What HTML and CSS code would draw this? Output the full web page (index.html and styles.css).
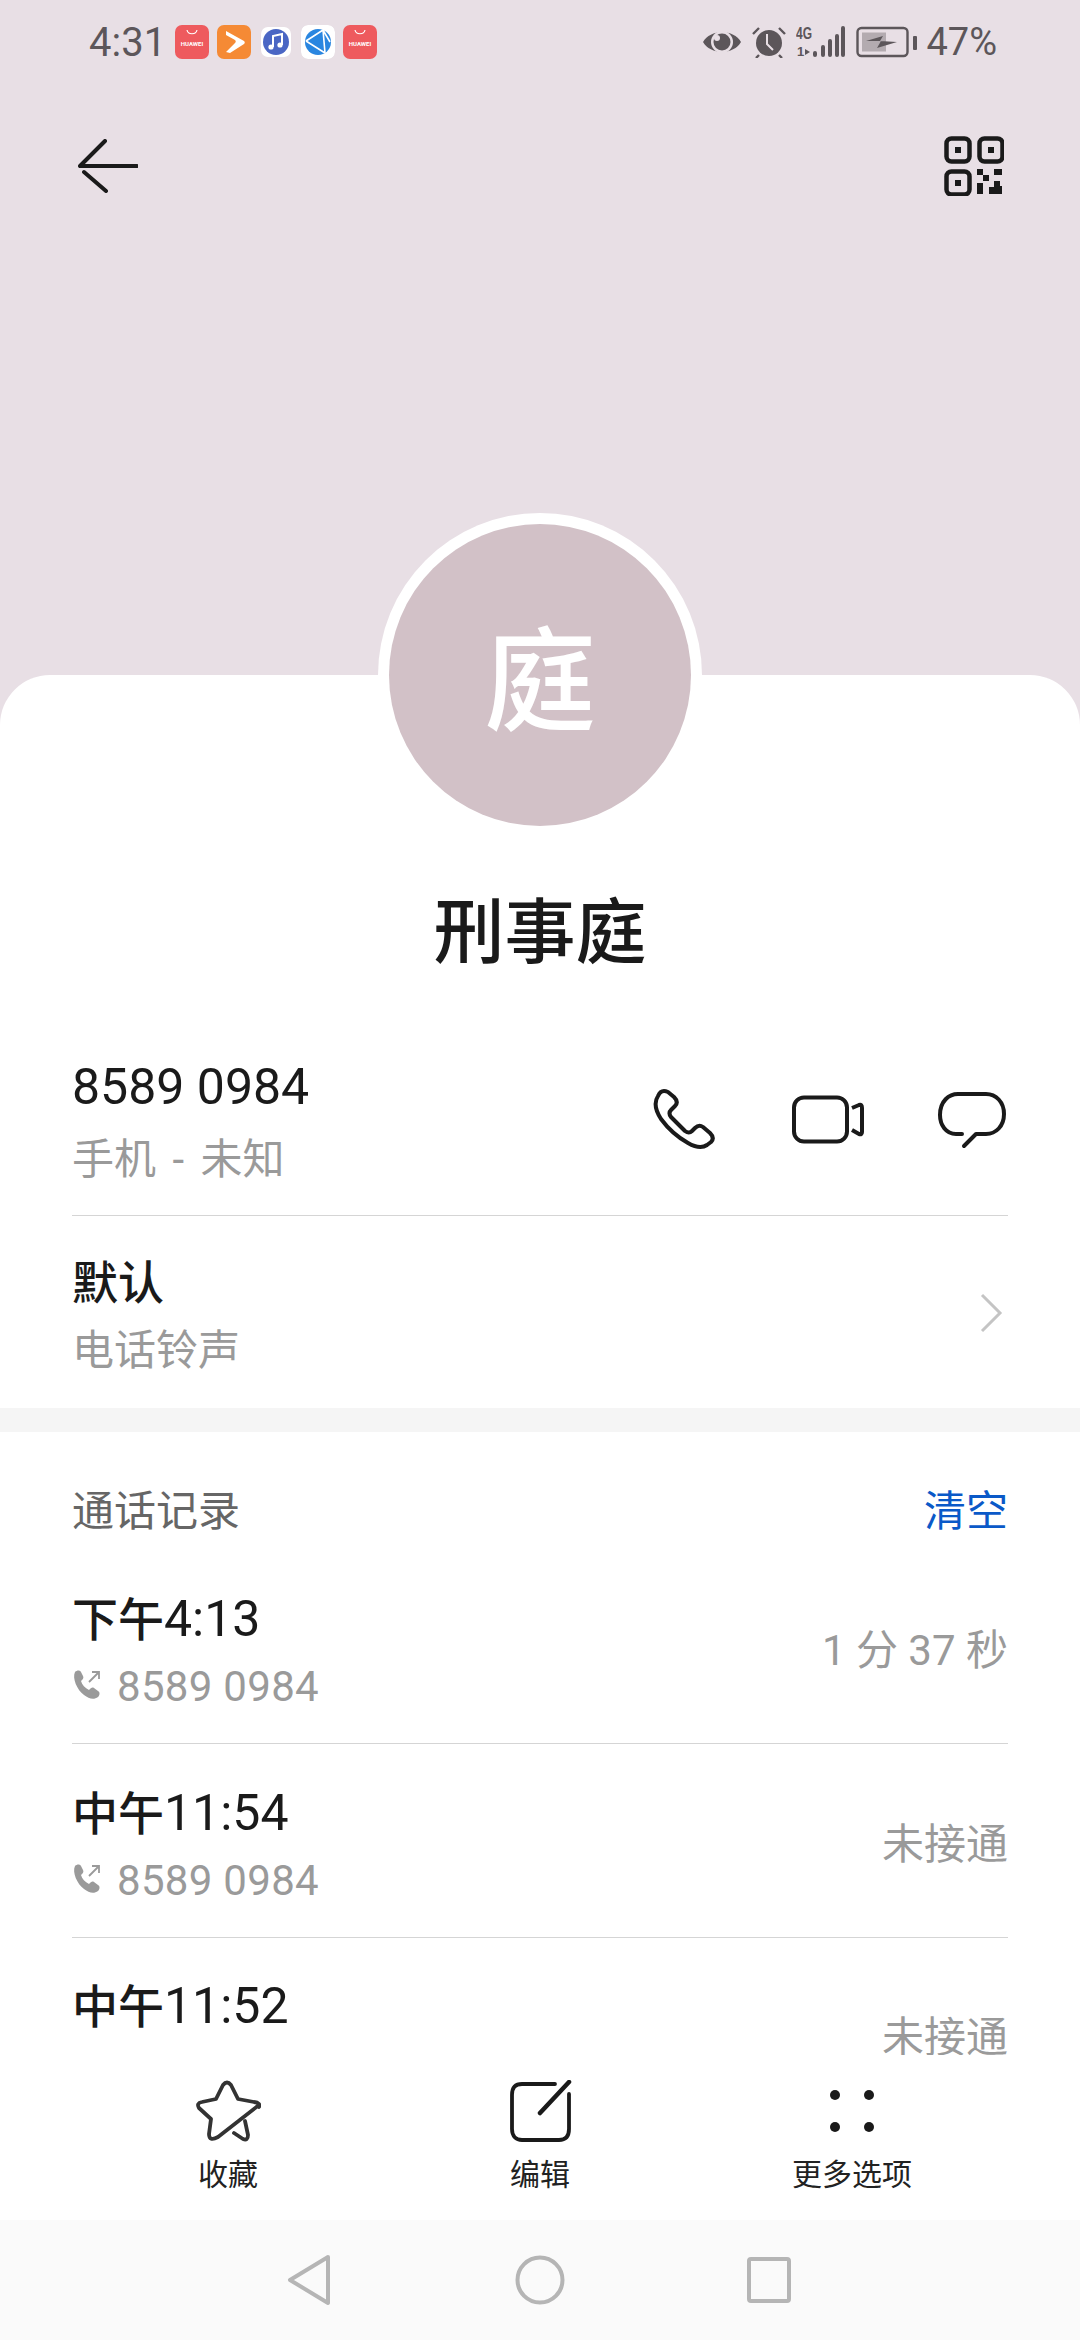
FILE: index.html
```html
<!DOCTYPE html>
<html lang="zh-CN">
<head>
  <meta charset="UTF-8">
  <title>刑事庭</title>
  <link rel="stylesheet" href="styles.css">
</head>
<body>
  <div class="screen">
    <header class="top">
      <div class="status">
        <span class="time">4:31</span>
        <div class="apps">
          <span class="app app-red"><svg viewBox="0 0 34 34"><path d="M12 5c1 5 9 5 10 0" fill="none" stroke="#fff" stroke-width="1.2"/></svg><b>HUAWEI</b></span>
          <span class="app app-orange"><svg viewBox="0 0 34 34"><path d="M9 6l18 10c1 1 1 2 0 3L13 28l-4-1 9-9c1-1 1-2 0-3L9 10z" fill="#fff"/></svg></span>
          <svg class="app app-small" viewBox="0 0 30 30"><rect width="30" height="30" rx="5" fill="#fff"/><circle cx="15" cy="15" r="13" fill="#4a66c4"/><path d="M12 20V9l9-2v11" fill="none" stroke="#fff" stroke-width="2"/><circle cx="10" cy="20" r="2.600" fill="#fff"/><circle cx="19" cy="18" r="2.600" fill="#fff"/></svg>
          <svg class="app" viewBox="0 0 34 34"><rect width="34" height="34" rx="7" fill="#fff"/><circle cx="17" cy="17" r="13" fill="#2a86e0"/><path d="M5 16l17-11M5 16l19 12M22 5l2 23M22 5l7 12" fill="none" stroke="#fff" stroke-width="1.600"/></svg>
          <span class="app app-red"><svg viewBox="0 0 34 34"><path d="M12 5c1 5 9 5 10 0" fill="none" stroke="#fff" stroke-width="1.2"/></svg><b>HUAWEI</b></span>
        </div>
        <div class="indicators">
          <svg width="40" height="28" viewBox="0 0 40 28"><path d="M1 14C8 1 32 1 39 14 32 27 8 27 1 14z" fill="#5c565a"/><circle cx="20" cy="14" r="11" fill="#e8dfe5"/><circle cx="20" cy="14" r="8.500" fill="#5c565a"/><circle cx="15" cy="10" r="3" fill="#e8dfe5"/></svg>
          <svg width="34" height="32" viewBox="0 0 34 32"><circle cx="17" cy="17" r="13" fill="#5c565a"/><path d="M15 8v10l6 6" fill="none" stroke="#e8dfe5" stroke-width="2"/><path d="M1 8l6-6M33 8l-6-6M7 29l-3 3M27 29l3 3" stroke="#5c565a" stroke-width="2.400"/></svg>
          <svg width="50" height="32" viewBox="0 0 50 32"><text x="0" y="13" class="net" textLength="16" lengthAdjust="spacingAndGlyphs">4G</text><text x="1" y="30" class="net-small">1</text><path d="M9 23l5 3-5 3z" fill="#5c565a"/><path d="M19 27v2M27 21v8M34 15v14M41 10v19M47 2v27" stroke="#5c565a" stroke-width="4" stroke-linecap="round"/></svg>
          <svg width="62" height="32" viewBox="0 0 62 32"><rect x="1.500" y="2" width="50" height="28" rx="4" fill="none" stroke="#5c565a" stroke-width="2.400"/><rect x="6" y="6.500" width="24" height="19" fill="#b3abb0"/><path d="M10 15l17-5-3 5 17 1-20 6 4-7z" fill="#5c565a"/><rect x="57" y="10" width="4" height="14" rx="1" fill="#5c565a"/></svg>
          <span class="pct">47%</span>
        </div>
      </div>
      <div class="toolbar">
        <svg width="60" height="54" viewBox="0 0 60 54"><path d="M27 2L2 27h57M6 33l22 19" fill="none" stroke="#1a1a1a" stroke-width="4" stroke-linecap="round" stroke-linejoin="round"/></svg>
        <svg width="60" height="60" viewBox="0 0 60 60">
          <g fill="none" stroke="#1a1a1a" stroke-width="4.500"><rect x="2.500" y="2.500" width="23" height="23" rx="5"/><rect x="35.500" y="2.500" width="23" height="23" rx="5"/><rect x="2.500" y="35.500" width="23" height="23" rx="5"/></g>
          <g fill="#1a1a1a"><rect x="11" y="11" width="6" height="6"/><rect x="44" y="11" width="6" height="6"/><rect x="11" y="44" width="6" height="6"/><path d="M33 33h6v6h-6zM50 33h8v6h-8zM39 39h6v6h-6zM33 47h6v11h-6zM50 45h6v5h2v8H45v-7h5z"/></g>
        </svg>
      </div>
    </header>

    <div class="avatar-ring"><div class="avatar">庭</div></div>

    <main class="card">
      <h1 class="name">刑事庭</h1>

      <section class="info">
        <div class="row row-phone">
          <div>
            <div class="title">8589 0984</div>
            <div class="sub">手机 - 未知</div>
          </div>
          <div class="actions">
            <svg width="72" height="72" viewBox="0 0 72 72"><path d="M10 9Q13 2 20 5L26 10Q31 15 27 19L23 23Q20 26 23 30L37 44Q41 47 44 44L47 41Q51 37 55 40L62 46Q67 51 63 55L59 58Q52 63 40 56 24 47 13 32 4 18 10 9z" fill="none" stroke="#1a1a1a" stroke-width="4" stroke-linejoin="round"/></svg>
            <svg width="72" height="72" viewBox="0 0 72 72"><rect x="2" y="10.500" width="53" height="44" rx="10" fill="none" stroke="#1a1a1a" stroke-width="4"/><path d="M60 21L67 18Q70 17 70 21V45Q70 48 67 47L60 43" fill="none" stroke="#1a1a1a" stroke-width="4" stroke-linejoin="round"/></svg>
            <svg width="72" height="72" viewBox="0 0 72 72"><path d="M26 47H20C10 47 4 38 4 28 4 14 13 7 22 7H50C60 7 68 15 68 27 68 39 60 47 50 47H40L28 59" fill="none" stroke="#1a1a1a" stroke-width="4" stroke-linecap="round" stroke-linejoin="round"/></svg>
          </div>
        </div>
        <div class="row row-ring">
          <div>
            <div class="title title-cjk">默认</div>
            <div class="sub">电话铃声</div>
          </div>
          <svg class="chevron" width="24" height="40" viewBox="0 0 24 40"><path d="M3 2l18 18L3 38" fill="none" stroke="#c4c4c4" stroke-width="3"/></svg>
        </div>
      </section>

      <div class="band"></div>

      <section class="calls">
        <div class="calls-head">
          <span class="calls-title">通话记录</span>
          <span class="clear">清空</span>
        </div>
        <div class="call">
          <div>
            <div class="call-time"><span class="cjk">下午</span>4:13</div>
            <div class="call-num"><svg width="32" height="32" viewBox="0 0 32 32"><use href="#out"/></svg>8589 0984</div>
          </div>
          <span class="call-state">1 分 37 秒</span>
        </div>
        <div class="call">
          <div>
            <div class="call-time"><span class="cjk">中午</span>11:54</div>
            <div class="call-num"><svg width="32" height="32" viewBox="0 0 32 32"><use href="#out"/></svg>8589 0984</div>
          </div>
          <span class="call-state">未接通</span>
        </div>
        <div class="call">
          <div>
            <div class="call-time"><span class="cjk">中午</span>11:52</div>
          </div>
          <span class="call-state">未接通</span>
        </div>
      </section>
    </main>

    <nav class="bottom">
      <div class="tool">
        <svg width="66" height="62" viewBox="0 0 66 62"><path d="M64 25L23 57Q14 62 14 54L16 39 4 28Q1 23 7 22L21 19 28 5Q32 0 36 5L43 19 59 22Q66 23 64 27M39 53L48 59Q53 61 53 55L50 41" fill="none" stroke="#333" stroke-width="3.800" stroke-linecap="round" stroke-linejoin="round"/></svg>
        <span>收藏</span>
      </div>
      <div class="tool">
        <svg width="66" height="62" viewBox="0 0 66 62"><path d="M48 4H15C8 4 5 8 5 15V49C5 56 9 60 15 60H52C59 60 62 56 62 49V14" fill="none" stroke="#1a1a1a" stroke-width="3.800" stroke-linecap="round"/><path d="M33 33L62 2" stroke="#1a1a1a" stroke-width="4.500" stroke-linecap="round"/></svg>
        <span>编辑</span>
      </div>
      <div class="tool">
        <svg width="66" height="62" viewBox="0 0 66 62"><circle cx="16" cy="15" r="5" fill="#1a1a1a"/><circle cx="50" cy="15" r="5" fill="#1a1a1a"/><circle cx="16" cy="47" r="5" fill="#1a1a1a"/><circle cx="50" cy="47" r="5" fill="#1a1a1a"/></svg>
        <span>更多选项</span>
      </div>
    </nav>

    <footer class="navbar">
      <svg width="50" height="52" viewBox="0 0 50 52"><path d="M41 3L3 26l38 23z" fill="none" stroke="#b5b5b5" stroke-width="4" stroke-linejoin="round"/></svg>
      <svg width="50" height="50" viewBox="0 0 50 50"><circle cx="25" cy="25" r="22.500" fill="none" stroke="#b5b5b5" stroke-width="4"/></svg>
      <svg width="50" height="46" viewBox="0 0 50 46"><rect x="6" y="2" width="40" height="42" rx="2" fill="none" stroke="#b5b5b5" stroke-width="4"/></svg>
    </footer>
  </div>

  <svg width="0" height="0" class="defs">
    <symbol id="out" viewBox="0 0 32 32">
      <path d="M3 4c2-2 5-2 6 0l2 4c1 2 0 3-2 5 1 4 4 7 8 9 2-2 3-3 5-2l4 3c2 1 2 4 0 6-4 3-9 2-14-2C5 22 0 10 3 4z" fill="#9a9a9a"/>
      <path d="M17 14l10-10M20 4h7v7" fill="none" stroke="#9a9a9a" stroke-width="1.800"/>
    </symbol>
  </svg>
</body>
</html>
```

FILE: styles.css
```css
html {
  box-sizing: border-box;
}

*, *:before, *:after {
  box-sizing: inherit;
}

body {
  margin: 0;
  background: #fff;
  font-family: Roboto, "Noto Sans CJK SC", sans-serif;
  color: #1a1a1a;
}

.screen {
  position: relative;
  width: 1080px;
  height: 2340px;
  display: flex;
  flex-direction: column;
  overflow: hidden;
  background: #e8dfe5;
}

.defs {
  position: absolute;
}

.top {
  height: 675px;
  flex: none;
}

.status {
  height: 84px;
  padding: 0 83px 0 89px;
  display: flex;
  align-items: center;
  color: #5c565a;
}

.time {
  font-size: 40px;
  width: 86px;
}

.apps {
  display: flex;
  align-items: center;
  gap: 8px;
}

.app {
  position: relative;
  width: 34px;
  height: 34px;
  border-radius: 7px;
  display: block;
}

.app-small {
  width: 30px;
  height: 30px;
  margin: 0 2px;
}

.app svg {
  display: block;
  width: 34px;
  height: 34px;
}

.app b {
  position: absolute;
  left: 0;
  right: 0;
  top: 15px;
  text-align: center;
  font-size: 6px;
  font-weight: 700;
  color: #fff;
}

.app-red {
  background: #ee5a5e;
}

.app-orange {
  background: #f58a35;
}

.indicators {
  margin-left: auto;
  display: flex;
  align-items: center;
  gap: 10px;
}

.net {
  font-family: "Liberation Sans", sans-serif;
  font-size: 16px;
  font-weight: 700;
  fill: #5c565a;
}

.net-small {
  font-family: "Liberation Sans", sans-serif;
  font-size: 13px;
  font-weight: 700;
  fill: #5c565a;
}

.pct {
  font-size: 38px;
  margin-left: -2px;
}

.toolbar {
  padding: 52px 76px 0 78px;
  display: flex;
  justify-content: space-between;
  align-items: center;
}

/* sits half over the header and half over the card */
.avatar-ring {
  position: absolute;
  left: 378px;
  top: 513px;
  z-index: 1;
  width: 324px;
  height: 324px;
  padding: 11px;
  border-radius: 50%;
  background: #fff;
}

.avatar {
  width: 302px;
  height: 302px;
  border-radius: 50%;
  background: #d2c1c7;
  color: #fff;
  font-family: "Noto Sans CJK SC", sans-serif;
  font-size: 112px;
  font-weight: 500;
  line-height: 298px;
  text-align: center;
}

.card {
  flex: 1;
  min-height: 0;
  overflow: hidden;
  background: #fff;
  border-radius: 50px 50px 0 0;
}

.name {
  margin: 218px 0 0;
  font-size: 71px;
  font-weight: 500;
  line-height: 80px;
  text-align: center;
  color: #1a1a1a;
}

.info {
  padding: 0 72px;
  margin-top: 57px;
}

.row {
  display: flex;
  justify-content: space-between;
  align-items: center;
}

.row-phone {
  height: 186px;
  border-bottom: 1px solid #d5d5d5;
}

.row-ring {
  height: 192px;
  padding: 8px 5px 0 0;
}

.chevron {
  margin-top: -6px;
}

.title {
  font-size: 50px;
  font-weight: 450;
  line-height: 54px;
}

.title-cjk {
  font-size: 46px;
  font-weight: 500;
}

.sub {
  font-size: 42px;
  word-spacing: 6px;
  line-height: 52px;
  color: #9a9a9a;
  margin-top: 20px;
}

.row-ring .sub {
  margin-top: 15px;
}

.actions {
  display: flex;
  gap: 72px;
}

.band {
  height: 24px;
  background: #f5f5f5;
}

.calls {
  padding: 0 72px;
}

.calls-head {
  height: 118px;
  padding: 36px 0 4px;
  display: flex;
  justify-content: space-between;
  align-items: center;
  font-size: 42px;
}

.calls-title {
  color: #666;
}

.clear {
  color: #0a59c8;
}

.call {
  height: 194px;
  padding-top: 8px;
  display: flex;
  justify-content: space-between;
  align-items: center;
  border-bottom: 1px solid #d5d5d5;
}

.call:last-child {
  align-items: flex-start;
  padding-top: 38px;
}

.call-time {
  font-size: 50px;
  font-weight: 450;
  line-height: 60px;
}

.cjk {
  font-size: 46px;
  font-weight: 500;
}

.call-num {
  display: flex;
  align-items: center;
  gap: 13px;
  font-size: 42px;
  letter-spacing: 0.3px;
  line-height: 52px;
  color: #9a9a9a;
  margin-top: 11px;
}

.call-num svg {
  margin-top: -6px;
}

.call-state {
  font-size: 42px;
  color: #9a9a9a;
  margin-bottom: 8px;
}

.call:last-child .call-state {
  margin-top: 27px;
}

.bottom {
  flex: none;
  height: 165px;
  padding: 25px 72px 0;
  background: #fff;
  display: grid;
  grid-template-columns: repeat(3, 1fr);
}

.tool {
  display: flex;
  flex-direction: column;
  align-items: center;
  gap: 15px;
  font-size: 30px;
  line-height: 36px;
  color: #222;
}

.navbar {
  flex: none;
  height: 120px;
  background: #fafafa;
  display: flex;
  justify-content: center;
  align-items: center;
  gap: 178px;
}
```
